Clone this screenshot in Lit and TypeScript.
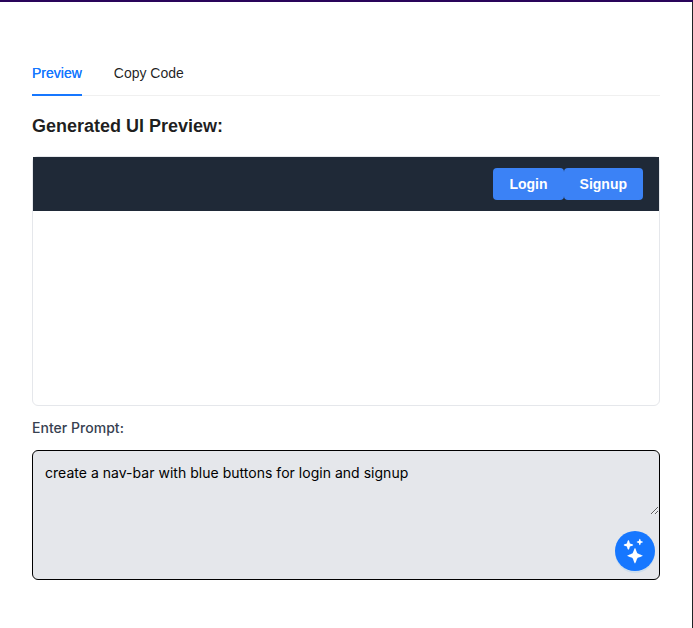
import { LitElement, html, css } from "lit";
import { customElement, state } from "lit/decorators.js";

@customElement("app-root")
export class AppRoot extends LitElement {
  static styles = css`
    :host {
      display: block;
      height: 628px;
      font: 14px/22px "Liberation Sans", Arial, sans-serif;
      color: rgba(0, 0, 0, 0.88);
    }
    * {
      box-sizing: border-box;
    }
    .page {
      height: 100%;
      overflow: hidden;
      background: #fff;
      border-top: 2px solid #29045a;
      display: flex;
    }
    .panel {
      flex: 1;
      border-right: 1px solid #1f2326;
      padding: 48px 32px 0;
      display: flex;
      flex-direction: column;
    }
    .tabs {
      display: flex;
      gap: 32px;
      height: 46px;
      flex: none;
      border-bottom: 1px solid #f0f0f0;
    }
    .tab {
      height: 46px;
      padding: 12px 0 10px;
      border: 0;
      border-bottom: 2px solid transparent;
      background: none;
      font: inherit;
      color: inherit;
      cursor: pointer;
    }
    .tab.active {
      color: #1677ff;
      border-bottom-color: #1677ff;
      text-shadow: 0 0 0.25px currentcolor;
    }
    .title {
      margin: 16px 0;
      font-size: 18px;
      line-height: 28px;
      font-weight: 700;
    }
    .preview {
      height: 250px;
      flex: none;
      border: 1px solid #e5e7eb;
      border-radius: 6px;
      background: #fff;
    }
    .nav {
      height: 54px;
      padding: 0 16px;
      background: #1f2937;
      display: flex;
      align-items: center;
      justify-content: flex-end;
    }
    .nav button {
      height: 32px;
      padding: 0 16px;
      border: 0;
      border-radius: 4px;
      background: #3b82f6;
      color: #fff;
      font: 700 14px/20px "Liberation Sans", Arial, sans-serif;
    }
    .label {
      margin: 12px 0;
      line-height: 20px;
      font-family: Inter, sans-serif;
      font-weight: 500;
      letter-spacing: 0.03px;
      color: #374151;
    }
    .prompt {
      position: relative;
      height: 130px;
      flex: none;
      border: 1px solid #000;
      border-radius: 6px;
      background: #e5e7eb;
    }
    .input {
      display: block;
      width: 100%;
      height: 64px;
      padding: 12px;
      border: 0;
      outline: 0;
      resize: vertical;
      background: transparent;
      color: #000;
      font: 14px/20px Inter, sans-serif;
      letter-spacing: 0.024px;
    }
    .generate {
      position: absolute;
      right: 4px;
      bottom: 8px;
      width: 40px;
      height: 40px;
      padding: 0;
      border: 0;
      border-radius: 50%;
      background: #1677ff;
      box-shadow: 0 2px 0 rgba(5, 145, 255, 0.1);
      display: flex;
    }
    .generate svg {
      width: 40px;
      height: 40px;
      fill: #fff;
    }
  `;

  @state() private active = "Preview";

  render() {
    return html`
      <div class="page">
        <main class="panel">
          <div class="tabs">
            ${["Preview", "Copy Code"].map(
              (name) => html`<button
                class="tab ${name === this.active ? "active" : ""}"
                @click=${() => (this.active = name)}
              >${name}</button>`
            )}
          </div>
          <h2 class="title">Generated UI Preview:</h2>
          <section class="preview">
            <nav class="nav"><button>Login</button><button>Signup</button></nav>
          </section>
          <label class="label" for="prompt">Enter Prompt:</label>
          <div class="prompt">
            <textarea class="input" id="prompt" spellcheck="false" .value=${"create a nav-bar with blue buttons for login and signup"}></textarea>
            <button class="generate" aria-label="Generate">
              <svg viewBox="0 0 40 40">
                <path d="M20 17C20.6 17 21.8 21.6 22.4 22.3C23.1 23 27.7 24.2 27.7 24.8C27.7 25.4 23.1 26.5 22.4 27.2C21.8 27.9 20.6 32.5 20 32.5C19.4 32.5 18.2 27.9 17.6 27.2C16.9 26.5 12.3 25.4 12.3 24.8C12.3 24.2 16.9 23 17.6 22.3C18.2 21.6 19.4 17 20 17Z" />
                <path d="M13.4 9Q14.2 9 14.9 12.5Q18.3 13.2 18.3 14Q18.3 14.8 14.9 15.4Q14.2 18.8 13.4 18.8Q12.6 18.8 11.9 15.4Q8.6 14.8 8.6 14Q8.6 13.2 11.9 12.5Q12.6 9 13.4 9Z" />
                <path d="M24.8 7.8Q25.3 7.8 25.8 10Q28 10.5 28 11Q28 11.5 25.8 12Q25.3 14.2 24.8 14.2Q24.3 14.2 23.8 12Q21.6 11.5 21.6 11Q21.6 10.5 23.8 10Q24.3 7.8 24.8 7.8Z" />
              </svg>
            </button>
          </div>
        </main>
      </div>
    `;
  }
}
